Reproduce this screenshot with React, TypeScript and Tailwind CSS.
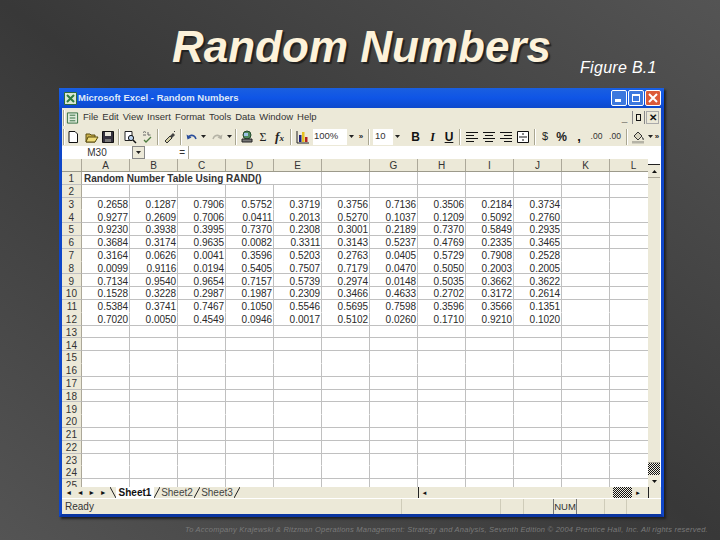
import React from 'react';

/* Data read off the sheet, rows 3-12, columns A-J */
const DATA = [
  ['0.2658', '0.1287', '0.7906', '0.5752', '0.3719', '0.3756', '0.7136', '0.3506', '0.2184', '0.3734'],
  ['0.9277', '0.2609', '0.7006', '0.0411', '0.2013', '0.5270', '0.1037', '0.1209', '0.5092', '0.2760'],
  ['0.9230', '0.3938', '0.3995', '0.7370', '0.2308', '0.3001', '0.2189', '0.7370', '0.5849', '0.2935'],
  ['0.3684', '0.3174', '0.9635', '0.0082', '0.3311', '0.3143', '0.5237', '0.4769', '0.2335', '0.3465'],
  ['0.3164', '0.0626', '0.0041', '0.3596', '0.5203', '0.2763', '0.0405', '0.5729', '0.7908', '0.2528'],
  ['0.0099', '0.9116', '0.0194', '0.5405', '0.7507', '0.7179', '0.0470', '0.5050', '0.2003', '0.2005'],
  ['0.7134', '0.9540', '0.9654', '0.7157', '0.5739', '0.2974', '0.0148', '0.5035', '0.3662', '0.3622'],
  ['0.1528', '0.3228', '0.2987', '0.1987', '0.2309', '0.3466', '0.4633', '0.2702', '0.3172', '0.2614'],
  ['0.5384', '0.3741', '0.7467', '0.1050', '0.5546', '0.5695', '0.7598', '0.3596', '0.3566', '0.1351'],
  ['0.7020', '0.0050', '0.4549', '0.0946', '0.0017', '0.5102', '0.0260', '0.1710', '0.9210', '0.1020'],
];

const COLUMNS = ['A', 'B', 'C', 'D', 'E', '', 'G', 'H', 'I', 'J', 'K', 'L'];
const ROWS = Array.from({ length: 25 }, (_, i) => i + 1);
const MENUS = ['File', 'Edit', 'View', 'Insert', 'Format', 'Tools', 'Data', 'Window', 'Help'];
const DITHER = 'bg-[repeating-conic-gradient(#111_0_25%,#f2efe3_0_50%)] bg-[length:2px_2px]';

function Sep() {
  return <div className="mx-[2px] h-[16px] w-[2px] shrink-0 border-l border-r border-l-[#a9a691] border-r-white" />;
}

function Drop() {
  return (
    <svg width="5" height="3" viewBox="0 0 5 3" className="shrink-0">
      <path d="M0 0h5L2.5 3z" fill="#222" />
    </svg>
  );
}

function Tool({ children, className = 'w-[17px]' }: { children: React.ReactNode; className?: string }) {
  return <div className={`flex shrink-0 items-center justify-center ${className}`}>{children}</div>;
}

function Icon({ children }: { children: React.ReactNode }) {
  return (
    <svg width="14" height="14" viewBox="0 0 14 14">
      {children}
    </svg>
  );
}

function AlignIcon({ kind }: { kind: 'left' | 'center' | 'right' }) {
  const x = kind === 'left' ? 1 : kind === 'center' ? 3 : 5;
  return (
    <Icon>
      <path d="M1 2.5h12M1 8.5h12" stroke="#111" strokeWidth="1.2" />
      <path d={`M${x} 5.5h8M${x} 11.5h8`} stroke="#111" strokeWidth="1.2" />
    </Icon>
  );
}

function StandardBar() {
  return (
    <>
      <Tool className="w-[16px]">
        <Icon><path d="M3 1.5h6l2.5 2.5v8.5H3z" fill="#fff" stroke="#111" /></Icon>
      </Tool>
      <Tool className="ml-[2px] w-[17px]">
        <Icon>
          <path d="M1 4h4l1 1h4v7H1z" fill="#c9b04a" stroke="#5a4d10" />
          <path d="M3 7h10l-3 5H1z" fill="#efdc7a" stroke="#5a4d10" />
        </Icon>
      </Tool>
      <Tool className="w-[16px]">
        <Icon>
          <path d="M1.5 1.5h11v11h-11z" fill="#35323f" stroke="#111" />
          <path d="M4 2h6v4H4z" fill="#e8e6da" />
          <path d="M4 9h6v3H4z" fill="#777" />
        </Icon>
      </Tool>
      <Sep />
      <Tool className="w-[16px]">
        <Icon>
          <path d="M2 1.5h7v9H2z" fill="#fff" stroke="#222" />
          <circle cx="8" cy="8" r="2.6" fill="#bcd3ee" stroke="#111" />
          <path d="M10 10l3 3" stroke="#111" strokeWidth="1.5" />
        </Icon>
      </Tool>
      <Tool>
        <Icon>
          <path d="M3 2.5a2 2 0 0 1 3 0M8 2v3h2.5M3 5h3" stroke="#666" fill="none" />
          <path d="M4 10l2 2 5-5" stroke="#4d7b3f" fill="none" strokeWidth="1.3" />
        </Icon>
      </Tool>
      <Sep />
      <Tool>
        <Icon>
          <path d="M2 11l5-5 2 2-5 5z" fill="#d4cfa4" stroke="#333" />
          <path d="M7 6l3-3 2 2-3 3z" fill="#444" />
          <path d="M11 1l1 1" stroke="#333" />
        </Icon>
      </Tool>
      <Sep />
      <Tool className="w-[15px]">
        <Icon>
          <path d="M3 8a4 4 0 0 1 7-1l1 2" stroke="#2b4e9b" strokeWidth="1.6" fill="none" />
          <path d="M1.5 4.5l1 5 4-2z" fill="#2b4e9b" />
        </Icon>
      </Tool>
      <Tool className="w-[8px]"><Drop /></Tool>
      <Tool className="ml-[2px] w-[16px]">
        <Icon>
          <path d="M11 8a4 4 0 0 0-7-1L3 9" stroke="#b5b3a6" strokeWidth="1.6" fill="none" />
          <path d="M12.5 4.5l-1 5-4-2z" fill="#b5b3a6" />
        </Icon>
      </Tool>
      <Tool className="w-[8px]"><Drop /></Tool>
      <Sep />
      <Tool className="w-[16px]">
        <Icon>
          <circle cx="7" cy="5" r="4" fill="#4f8a5b" stroke="#24492c" />
          <path d="M2 9h10v3H2z" fill="#777" stroke="#222" />
          <path d="M4 3h4v3H4z" fill="#9cc3e6" />
        </Icon>
      </Tool>
      <Tool className="w-[16px]"><span className="font-['Liberation_Serif'] text-[12px] leading-none text-[#222]">Σ</span></Tool>
      <Tool className="w-[17px]"><span className="font-['Liberation_Serif'] text-[13px] italic font-bold leading-none text-[#222]">f<span className="text-[9px]">x</span></span></Tool>
      <Sep />
      <Tool className="w-[17px]">
        <Icon>
          <path d="M1 1v12h12" stroke="#222" fill="none" />
          <path d="M3 5h2.5v7H3z" fill="#23237d" />
          <path d="M6 2h2.5v10H6z" fill="#e6c01f" />
          <path d="M9 7h2.5v5H9z" fill="#b32222" />
        </Icon>
      </Tool>
      <div className="ml-[2px] flex h-[16px] w-[34px] shrink-0 items-center bg-white pl-[1px] text-[9.5px] text-[#333]">100%</div>
      <Tool className="w-[9px]"><Drop /></Tool>
    </>
  );
}

function FormatBar() {
  return (
    <>
      <Tool className="w-[10px]"><span className="text-[8px] font-bold leading-none text-[#222]">»</span></Tool>
      <Sep />
      <div className="ml-[1px] flex h-[16px] w-[20px] shrink-0 items-center bg-white pl-[2px] text-[9.5px] text-[#333]">10</div>
      <Tool className="w-[9px]"><Drop /></Tool>
      <Tool className="ml-[5px] w-[17px]"><span className="text-[12px] font-bold leading-none text-[#111]">B</span></Tool>
      <Tool className="w-[17px]"><span className="font-['Liberation_Serif'] text-[12px] font-bold italic leading-none text-[#111]">I</span></Tool>
      <Tool className="w-[16px]"><span className="text-[12px] font-bold leading-none text-[#111] underline">U</span></Tool>
      <Sep />
      <Tool><AlignIcon kind="left" /></Tool>
      <Tool><AlignIcon kind="center" /></Tool>
      <Tool><AlignIcon kind="right" /></Tool>
      <Tool className="w-[18px]">
        <Icon>
          <path d="M1.5 1.5h11v11h-11z" fill="#fff" stroke="#111" />
          <path d="M7 3v2M7 9v2M3 7h8" stroke="#111" />
        </Icon>
      </Tool>
      <Sep />
      <Tool className="w-[14px]"><span className="text-[11px] leading-none text-[#222]">$</span></Tool>
      <Tool className="w-[19px]"><span className="text-[12px] font-bold leading-none text-[#222]">%</span></Tool>
      <Tool className="w-[16px]"><span className="text-[13px] font-bold leading-none text-[#111]">,</span></Tool>
      <Tool className="w-[19px]"><span className="text-[8.5px] leading-none text-[#333]">.00</span></Tool>
      <Tool className="w-[18px]"><span className="text-[8.5px] leading-none text-[#333]">.00</span></Tool>
      <Sep />
      <Tool className="w-[16px]">
        <Icon>
          <path d="M3 6l4-4 4 4-4 4z" fill="#d8d4c0" stroke="#333" />
          <path d="M11 7c1 1 2 2 1 3" stroke="#5a5a5a" />
          <path d="M1 11h12v2.5H1z" fill="#b5b3a6" />
        </Icon>
      </Tool>
      <Tool className="w-[8px]"><Drop /></Tool>
      <Tool className="w-[6px]"><span className="text-[8px] font-bold leading-none text-[#222]">»</span></Tool>
    </>
  );
}

function Sheet() {
  return (
    <div className="flex h-[328px] shrink-0 bg-white">
      <div className="w-[586px] shrink-0 overflow-hidden">
        <div className="flex h-[13px] border-b border-[#9c9a8b] bg-[#ece9d8]">
          <div className="w-[20px] shrink-0 border-r border-[#aca899]" />
          {COLUMNS.map((c, i) => (
            <div key={i} className="flex w-[48px] shrink-0 items-center justify-center border-r border-[#aca899] pt-[1px] text-[10px] leading-none text-[#333]">
              {c}
            </div>
          ))}
        </div>
        {ROWS.map((r) => {
          const values = r >= 3 && r <= 12 ? DATA[r - 3] : [];
          // every fourth row line is lost in the reference's scaling
          const line = r % 4 === 3 ? 'border-b-transparent' : 'border-b-[#c0c0c0]';
          return (
            <div key={r} className="flex h-[12.8px] overflow-hidden">
              <div className={`flex w-[20px] shrink-0 items-center justify-center border-r border-b border-r-[#aca899] bg-[#ece9d8] pt-[2px] leading-none text-[#333] ${line}`}>
                <span className="inline-block scale-x-[.87] text-[11.5px]">{r}</span>
              </div>
              {r === 1 && (
                <div className="flex h-full w-[192px] shrink-0 items-center border-b border-[#c0c0c0] pl-[2px] pt-[2px] text-[10px] font-bold leading-none text-[#333]">
                  Random Number Table Using RAND()
                </div>
              )}
              {COLUMNS.map((c, i) =>
                r === 1 && i < 4 ? null : (
                  <div key={i} className={`flex w-[48px] shrink-0 items-center justify-end border-r border-b border-r-[#c0c0c0] pr-[1px] pt-[2px] leading-none text-[#2a2a2a] ${line}`}>
                    <span className="inline-block origin-right scale-x-[.87] text-[11.5px]">{values[i] ?? ''}</span>
                  </div>
                ),
              )}
            </div>
          );
        })}
      </div>
      {/* vertical scrollbar */}
      <div className="flex w-[12px] shrink-0 flex-col bg-white">
        <div className="h-[5px] shrink-0" />
        <div className="flex h-[14px] shrink-0 items-center justify-center border-t border-b border-t-[#222] border-b-[#aca899] bg-[#ece9d8]">
          <svg width="5" height="3" viewBox="0 0 5 3"><path d="M0 3h5L2.5 0z" fill="#111" /></svg>
        </div>
        <div className="flex-1 border-b border-[#aca899] bg-[#ece9d8]" />
        <div className={`h-[12px] shrink-0 ${DITHER}`} />
        <div className="flex h-[12px] shrink-0 items-center justify-center bg-[#ece9d8]">
          <svg width="5" height="3" viewBox="0 0 5 3"><path d="M0 0h5L2.5 3z" fill="#111" /></svg>
        </div>
      </div>
    </div>
  );
}

function TabSlash({ back = false }: { back?: boolean }) {
  return (
    <svg width="6" height="11" viewBox="0 0 6 11" className="shrink-0">
      <path d={back ? 'M0 0l6 11' : 'M6 0L0 11'} stroke="#222" />
    </svg>
  );
}

function TabBar() {
  return (
    <div className="flex h-[11px] shrink-0 items-center bg-[#ece9d8] text-[10px] leading-none text-[#444]">
      <div className="flex w-[48px] shrink-0 items-center justify-around px-[1px] text-[7px] text-[#111]">
        <span>◄</span><span>◄</span><span>►</span><span>►</span>
      </div>
      <TabSlash back />
      <div className="flex h-full w-[38px] shrink-0 items-center justify-center bg-white font-bold text-[#111]">Sheet1</div>
      <TabSlash />
      <div className="w-[34px] shrink-0 text-center">Sheet2</div>
      <TabSlash />
      <div className="w-[34px] shrink-0 text-center">Sheet3</div>
      <TabSlash />
      <div className="w-[178px] shrink-0" />
      <div className="flex h-full w-[12px] shrink-0 items-center justify-center border-l border-l-[#222] text-[6px] text-[#111]">◄</div>
      <div className="w-[183px] shrink-0 bg-[#ece9d8]" />
      <div className={`h-full w-[19px] shrink-0 ${DITHER}`} />
      <div className="flex h-full w-[12px] shrink-0 items-center justify-center text-[6px] text-[#111]">►</div>
      <div className="ml-[4px] h-full w-[1px] shrink-0 bg-[#222]" />
    </div>
  );
}

function StatusBar() {
  return (
    <div className="flex h-[16px] shrink-0 items-center border-t border-white bg-[#ece9d8] text-[10px] leading-none text-[#333]">
      <div className="w-[339px] shrink-0 pl-[3px]">Ready</div>
      <div className="h-full w-[99px] shrink-0 border-l border-[#cfccb9]" />
      <div className="h-full w-[23px] shrink-0 border-l border-[#cfccb9]" />
      <div className="h-full w-[30px] shrink-0 border-l border-[#cfccb9]" />
      <div className="flex h-full w-[24px] shrink-0 items-center justify-center border-x border-[#777] text-[9.5px]">NUM</div>
      <div className="h-full w-[27px] shrink-0" />
      <div className="h-full w-[22px] shrink-0 border-l border-[#cfccb9]" />
      <div className="h-full flex-1 border-l border-[#cfccb9]" />
    </div>
  );
}

function ExcelWindow() {
  return (
    <div className="flex h-[429px] w-[605px] flex-col border-x-[3px] border-b-[3px] border-x-[#0f46c8] border-b-[#0a35a0] shadow-[2px_2px_2px_#222] font-['Liberation_Sans',sans-serif]">
      {/* title bar */}
      <div className="-mx-[3px] flex h-[20px] shrink-0 items-center bg-gradient-to-b from-[#1a5fe0] via-[#0f55e6] to-[#0d49cc] pl-[5px] pr-[3px]">
        <svg width="13" height="13" viewBox="0 0 13 13" className="shrink-0">
          <path d="M0.5 0.5h12v12h-12z" fill="#d9e8d4" stroke="#2f6b3c" />
          <path d="M3 3l7 7M10 3l-7 7" stroke="#2f7d3f" strokeWidth="2" />
        </svg>
        <span className="ml-[1px] flex-1 text-[9.5px] font-bold text-[#dfe8f6]">Microsoft Excel - Random Numbers</span>
        <div className="flex gap-[1px]">
          <div className="flex h-[16px] w-[16px] items-end rounded-[2px] border border-white bg-[#3d78de] p-[3px]"><div className="h-[3px] w-[6px] bg-white" /></div>
          <div className="h-[16px] w-[16px] rounded-[2px] border border-white bg-[#3d78de] p-[3px]"><div className="h-full w-full border border-t-2 border-white" /></div>
          <div className="flex h-[16px] w-[16px] items-center justify-center rounded-[2px] border border-white bg-[#dc5a38]">
            <svg width="10" height="10" viewBox="0 0 10 10"><path d="M1 1l8 8M9 1l-8 8" stroke="#fff" strokeWidth="2" /></svg>
          </div>
        </div>
      </div>
      {/* menu bar */}
      <div className="flex h-[19px] shrink-0 items-center bg-[#ece9d8] pl-[1px] pr-[2px] text-[9.5px] text-[#333]">
        <div className="h-[16px] w-[2px] shrink-0 border-l border-r border-l-[#a9a691] border-r-white" />
        <svg width="13" height="14" viewBox="0 0 14 14" className="ml-[1px] shrink-0">
          <path d="M1.5 1.5h11v11h-11z" fill="#dfeadb" stroke="#2f6b3c" />
          <path d="M4 4h6M4 7h6M4 10h6" stroke="#2f6b3c" />
        </svg>
        <div className="ml-[4px] flex flex-1 gap-[4px]">
          {MENUS.map((m) => <span key={m}>{m}</span>)}
        </div>
        <div className="flex gap-[1px] text-[#111]">
          <div className="flex h-[13px] w-[13px] items-end justify-center bg-[#ece9d8] pb-[1px] text-[10px] font-bold leading-none">_</div>
          <div className="h-[13px] w-[13px] border-x border-[#888] p-[3px]"><div className="h-full w-full border border-[#111]" /></div>
          <div className="flex h-[13px] w-[13px] items-center justify-center border border-[#aaa] text-[10px] font-bold leading-none">✕</div>
        </div>
      </div>
      {/* toolbars */}
      <div className="flex h-[19px] shrink-0 items-center overflow-hidden bg-[#ece9d8] pl-[1px]">
        <div className="h-[16px] w-[2px] shrink-0 border-l border-r border-l-[#a9a691] border-r-white" />
        <StandardBar />
        <FormatBar />
      </div>
      {/* formula bar */}
      <div className="flex h-[13px] shrink-0 bg-white text-[10px] leading-none text-[#333]">
        <div className="flex w-[70px] shrink-0 items-center justify-center">M30</div>
        <div className="flex w-[13px] shrink-0 items-center justify-center border border-[#888] bg-[#ece9d8]"><Drop /></div>
        <div className="flex w-[43px] shrink-0 items-center justify-end pr-[3px]">=</div>
        <div className="flex-1 border-l border-[#aca899]" />
      </div>
      <Sheet />
      <TabBar />
      <StatusBar />
    </div>
  );
}

export default function App() {
  return (
    <div className="flex h-[540px] w-[720px] flex-col overflow-hidden bg-[linear-gradient(to_top_right,#545454,#383838_50%,#545454)] font-['Liberation_Sans',sans-serif]">
      <div className="flex h-[88px] shrink-0 pl-[172px]">
        <h1 className="mt-[23px] w-[408px] shrink-0 whitespace-nowrap text-[44px] font-bold italic leading-[48px] text-[#fdf2da] [text-shadow:2px_2px_1px_#222]">
          Random Numbers
        </h1>
        <span className="mt-[58px] whitespace-nowrap text-[16px] italic leading-[20px] tracking-[0.3px] text-white">Figure B.1</span>
      </div>
      <div className="shrink-0 pl-[59px]">
        <ExcelWindow />
      </div>
      <p className="mt-[8px] whitespace-nowrap pl-[185px] text-[7.5px] italic leading-[10px] tracking-[0.24px] text-[#7a7a7a]">
        To Accompany Krajewski &amp; Ritzman Operations Management: Strategy and Analysis, Seventh Edition © 2004 Prentice Hall, Inc. All rights reserved.
      </p>
    </div>
  );
}
